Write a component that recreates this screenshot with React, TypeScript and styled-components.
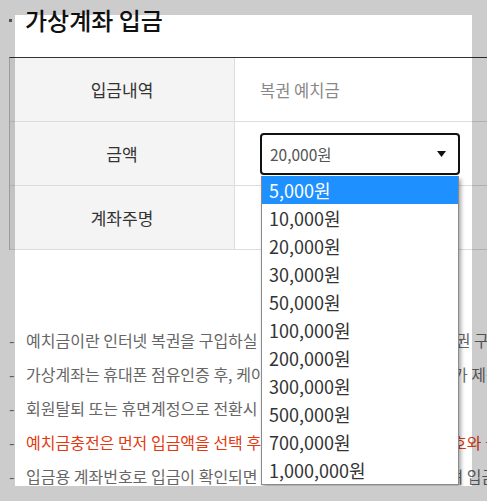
import styled, { createGlobalStyle } from 'styled-components';

const GlobalStyle = createGlobalStyle`
    html, body {
        margin: 0;
        padding: 0;
        background: #cccccc;
        overflow: hidden;
    }
    body {
        font-family: "Noto Sans CJK KR", "Noto Sans", sans-serif;
    }
`;

const Page = styled.div`
    position: relative;
    height: 486px;
    overflow: hidden;
    background: #ffffff;
`;

// dimmed backdrop with a window left open over the panel
const Backdrop = styled.div`
    position: absolute;
    left: 15px;
    top: 15px;
    width: 457px;
    height: 520px;
    box-shadow: 0 0 0 1200px rgba(0, 0, 0, 0.2);
    pointer-events: none;
    z-index: 1;
`;

const TitleBar = styled.h2`
    display: flex;
    align-items: center;
    margin: 0;
    padding: 3px 0 20px 9px;
    font-size: 24px;
    line-height: 34px;
    font-weight: 500;
    color: #111111;
`;

const Bullet = styled.span`
    width: 3px;
    height: 3px;
    margin-right: 13px;
    background: #666666;
`;

const Table = styled.div`
    width: 540px;
    margin-left: 9px;
    border-top: 1px solid #333333;
    border-left: 1px solid #c4c4c4;
`;

const Row = styled.div`
    display: grid;
    grid-template-columns: 225px 1fr;
    height: 64px;
    box-sizing: border-box;
    border-bottom: 1px solid #dddddd;
`;

const HeadCell = styled.div`
    display: flex;
    align-items: center;
    justify-content: center;
    background: #f4f4f4;
    border-right: 1px solid #dddddd;
    font-size: 17px;
    color: #333333;
`;

const Cell = styled.div<{ $muted?: boolean }>`
    display: flex;
    align-items: center;
    padding-left: 25px;
    font-size: 16.5px;
    color: ${(p) => (p.$muted ? '#888888' : '#333333')};
`;

const SelectWrap = styled.div`
    position: relative;
    width: 200px;
`;

const SelectBox = styled.div`
    display: flex;
    align-items: center;
    justify-content: space-between;
    height: 42px;
    box-sizing: border-box;
    padding: 0 12px 0 8px;
    border: 2px solid #111111;
    border-radius: 4px;
    font-size: 15.5px;
    color: #555555;
    background: #ffffff;
`;

const OptionList = styled.ul`
    position: absolute;
    top: 43px;
    left: 1px;
    right: 1px;
    margin: 0;
    padding: 0;
    list-style: none;
    background: #ffffff;
    border: 1px solid #8a8a8a;
    border-top: none;
    box-shadow: 2px 3px 4px rgba(0, 0, 0, 0.35);
    z-index: 2;
`;

const Option = styled.li<{ $active?: boolean }>`
    height: 28px;
    padding-left: 7px;
    font-size: 18px;
    line-height: 28px;
    color: ${(p) => (p.$active ? '#ffffff' : '#333333')};
    background: ${(p) => (p.$active ? '#1e90ff' : 'transparent')};
`;

const Notes = styled.ul`
    margin: 73px 0 0;
    padding: 0 0 0 9px;
    list-style: none;
`;

const Note = styled.li<{ $alert?: boolean }>`
    display: flex;
    height: 34px;
    font-size: 16px;
    line-height: 34px;
    white-space: nowrap;
    color: ${(p) => (p.$alert ? '#e4380f' : '#666666')};
`;

const Dash = styled.span`
    flex: none;
    width: 17px;
    color: #777777;
`;

const amounts = [
    '5,000원',
    '10,000원',
    '20,000원',
    '30,000원',
    '50,000원',
    '100,000원',
    '200,000원',
    '300,000원',
    '500,000원',
    '700,000원',
    '1,000,000원',
];

const notes = [
    { text: '예치금이란 인터넷 복권을 구입하실 수 있도록 미리 충전해 두는 복권 구매 전용 금액입니다.' },
    { text: '가상계좌는 휴대폰 점유인증 후, 케이뱅크의 예치금 전용 계좌번호가 제공됩니다.' },
    { text: '회원탈퇴 또는 휴면계정으로 전환시 예치금은 환불 처리됩니다.' },
    { text: '예치금충전은 먼저 입금액을 선택 후 발급받은 입금용 가상계좌 번호와 금액을 확인하세요.', alert: true },
    { text: '입금용 계좌번호로 입금이 확인되면 예치금으로 즉시 자동 충전되며 입금용 계좌는 계속 사용됩니다.' },
];

function Caret() {
    return (
        <svg width="9" height="6" viewBox="0 0 9 6">
            <path d="M0 0 H9 L4.5 6 Z" fill="#111" />
        </svg>
    );
}

export default function App() {
    return (
        <>
            <GlobalStyle />
            <Page>
                <TitleBar>
                    <Bullet />
                    가상계좌 입금
                </TitleBar>
                <Table>
                    <Row>
                        <HeadCell>입금내역</HeadCell>
                        <Cell $muted>복권 예치금</Cell>
                    </Row>
                    <Row>
                        <HeadCell>금액</HeadCell>
                        <Cell>
                            <SelectWrap>
                                <SelectBox>
                                    20,000원
                                    <Caret />
                                </SelectBox>
                                <OptionList>
                                    {amounts.map((a, i) => (
                                        <Option key={a} $active={i === 0}>{a}</Option>
                                    ))}
                                </OptionList>
                            </SelectWrap>
                        </Cell>
                    </Row>
                    <Row>
                        <HeadCell>계좌주명</HeadCell>
                        <Cell />
                    </Row>
                </Table>
                <Notes>
                    {notes.map((n) => (
                        <Note key={n.text} $alert={n.alert}>
                            <Dash>-</Dash>
                            {n.text}
                        </Note>
                    ))}
                </Notes>
                <Backdrop />
            </Page>
        </>
    );
}
